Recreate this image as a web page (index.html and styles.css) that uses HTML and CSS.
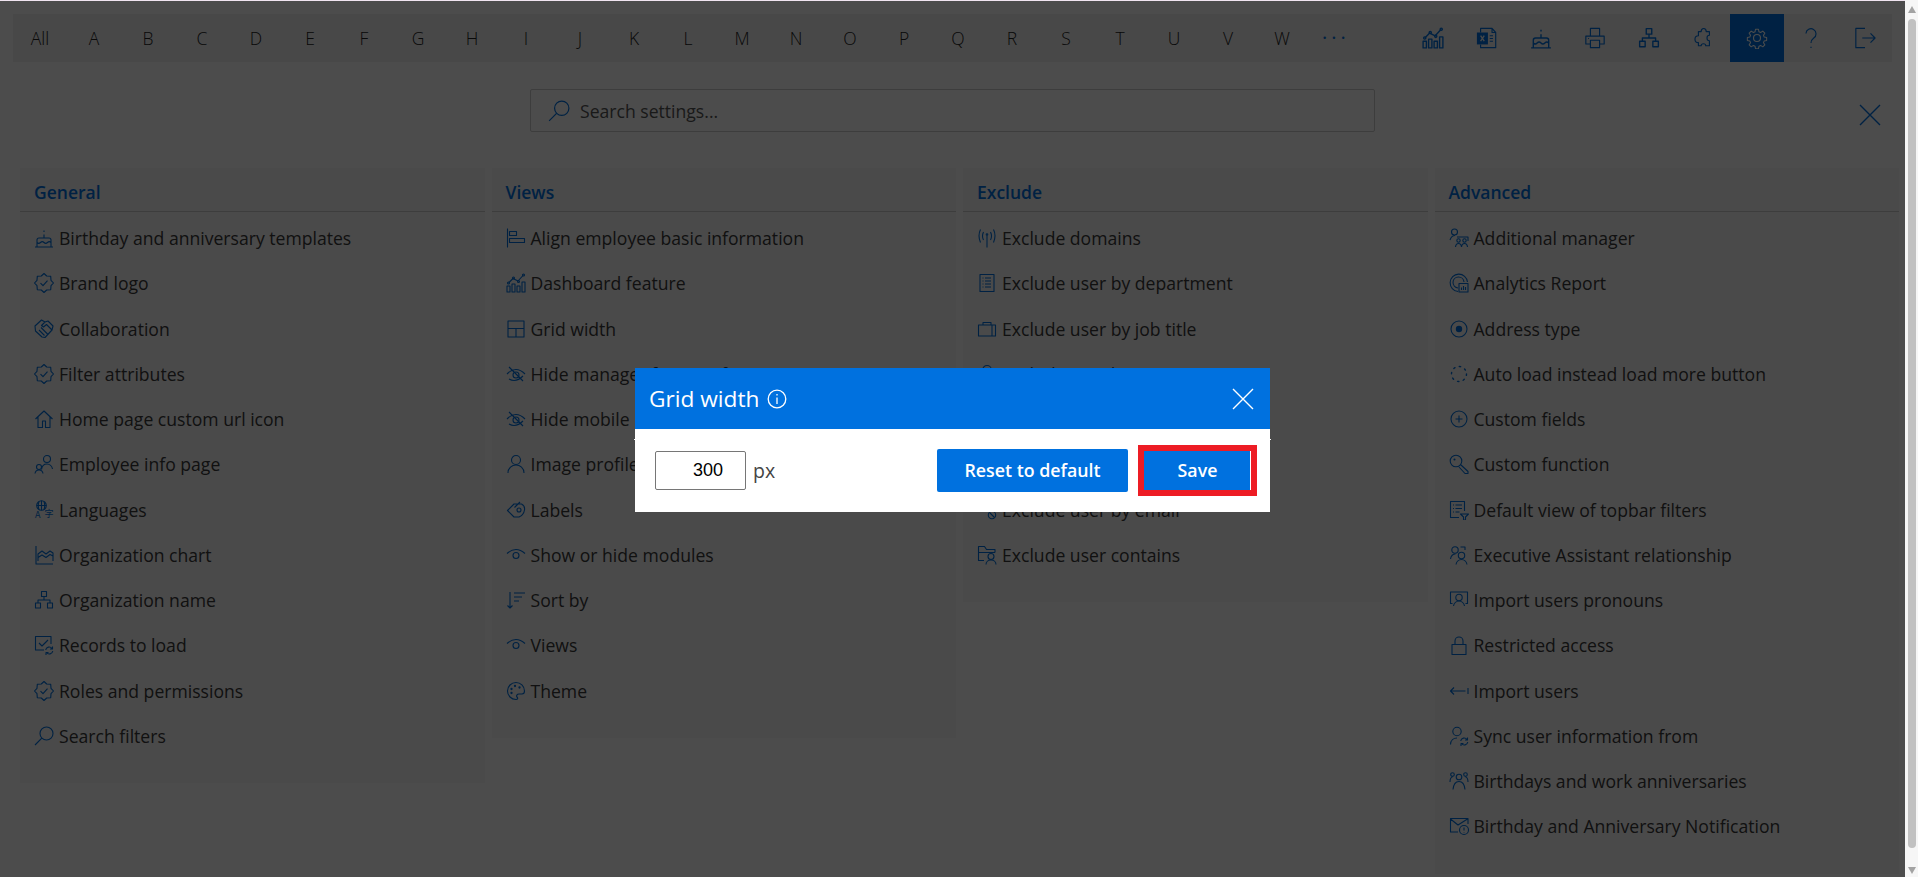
FILE: index.html
```html
<!DOCTYPE html>
<html lang="en">
<head>
<meta charset="utf-8">
<title>Settings</title>
<link rel="stylesheet" href="styles.css">
</head>
<body>
<svg class="defs" aria-hidden="true">
  <symbol id="cake" viewBox="0 0 20 20"><path d="M1 19h18M3 19v-7a2 2 0 0 1 2-2h10a2 2 0 0 1 2 2v7M3 14.500q1.700 1.800 3.500 0t3.500 0 3.500 0 3.500 0M10 10V6.500M10 2.500v1.500"/></symbol>
  <symbol id="badge" viewBox="0 0 20 20"><path d="M10 .5 12.700 3 16.700 3.300 17 7.300 19.500 10 17 12.700 16.700 16.700 12.700 17 10 19.500 7.300 17 3.300 16.700 3 12.700 .5 10 3 7.300 3.300 3.300 7.300 3ZM6.500 10.200 9 12.700 13.500 7.700"/></symbol>
  <symbol id="hands" viewBox="0 0 20 20"><path d="M1 7 7.500 1 11 3 14 2 19 7 18 11 11 18.500 8 18 1.500 12ZM11 3 7.500 6.500 9.500 8 12.500 5.500 18 11M7 8.500 13.500 15M5 11 10.500 16.500"/></symbol>
  <symbol id="home" viewBox="0 0 20 20"><path d="M1.500 10 10 2l8.500 8M4 8v10.500h4.500V12h3v6.500H16V8"/></symbol>
  <symbol id="people" viewBox="0 0 20 20"><circle cx="13" cy="5" r="3.500"/><path d="M7.500 15.500c.5-3.500 3-5.500 5.500-5.500s5 2 5.500 5"/><circle cx="5" cy="13" r="2.500"/><path d="M1 19.500c.3-2 2-3.500 4-3.500s3.700 1.500 4 3.500"/></symbol>
  <symbol id="area" viewBox="0 0 20 20"><path d="M2 1v18h17M4 16V9l4-3 4 3 4-3 3 2v8M4 12.500l4-2.500 4 2.500 4-3 3 1.500"/></symbol>
  <symbol id="org" viewBox="0 0 20 20"><rect x="7.500" y="1.500" width="5" height="5"/><path d="M10 6.500V10M4 13v-3h12v3"/><rect x="1.500" y="13" width="5" height="5"/><rect x="13.500" y="13" width="5" height="5"/></symbol>
  <symbol id="records" viewBox="0 0 20 20"><path d="M17 9V1.500H1.500V15H10M5 8l3 3 6-6M11.700 15a3.500 3.500 0 0 1 6.300-1.500M18.800 16a3.500 3.500 0 0 1-6.300 1.500M18.500 11.500V14H16M12 20v-2.500h2.500"/></symbol>
  <symbol id="search" viewBox="0 0 20 20"><circle cx="12.500" cy="7.500" r="6.500"/><path d="M7.800 12.200 1 19"/></symbol>
  <symbol id="align" viewBox="0 0 20 20"><path d="M1.500 .5v19"/><rect x="3.500" y="3.500" width="7" height="4"/><rect x="3.500" y="10.500" width="15" height="4"/></symbol>
  <symbol id="dash" viewBox="0 0 20 20"><rect x="1" y="13" width="3" height="6"/><rect x="6" y="11" width="3" height="8"/><rect x="11" y="13" width="3" height="6"/><rect x="16" y="9" width="3" height="10"/><path d="M3 9.500 7 5.500 12 8 17 2.500"/><circle cx="2.500" cy="10" r="1"/><circle cx="7.500" cy="5" r="1"/><circle cx="12.500" cy="8.500" r="1"/><circle cx="17.500" cy="2" r="1"/></symbol>
  <symbol id="grid" viewBox="0 0 20 20"><rect x="2" y="2" width="16" height="16"/><path d="M2 9.500h16M10 9.500V18"/></symbol>
  <symbol id="eyeoff" viewBox="0 0 20 20"><path d="M1 10q9-9 18 0M3 15q7 4 14-3M3 3l14 14"/><circle cx="10" cy="11" r="3"/></symbol>
  <symbol id="person" viewBox="0 0 20 20"><circle cx="10" cy="6" r="4.500"/><path d="M2 19c0-5 4-8 8-8s8 3 8 8"/></symbol>
  <symbol id="tag" viewBox="0 0 20 20"><path d="M1.500 10.500 8 4h7.500c2 1 3.500 3 3 6s-3 6-5.500 7H8ZM14 2 8.500 7.500"/><circle cx="13" cy="10" r="2"/></symbol>
  <symbol id="eye" viewBox="0 0 20 20"><path d="M1 8.500Q10 .5 19 8.500"/><circle cx="10" cy="10.500" r="3"/></symbol>
  <symbol id="sort" viewBox="0 0 20 20"><path d="M4 2v16M1.500 15.500 4 18l2.500-2.500M8 3h11M8 7h8M8 11h5"/></symbol>
  <symbol id="palette" viewBox="0 0 20 20"><path d="M10 1.500a8.500 8.500 0 1 0 0 17c2 0 2-1.500 1-2.500s0-3 2-3h3c2 0 2.500-2 2.500-3 0-5-4-8.500-8.500-8.500Z"/><circle cx="5.500" cy="8" r=".6"/><circle cx="9" cy="5" r=".6"/><circle cx="13.500" cy="6.500" r=".6"/><circle cx="5.500" cy="12" r=".6"/></symbol>
  <symbol id="signal" viewBox="0 0 20 20"><path d="M10 7.500v12M6.500 4q-2 4 0 8M3.500 1.500q-3 6 0 13M13.500 4q2 4 0 8M16.500 1.500q3 6 0 13"/><circle cx="10" cy="6.500" r=".8"/></symbol>
  <symbol id="doc" viewBox="0 0 20 20"><rect x="3" y="1.500" width="14" height="17"/><path d="M5.500 5h1M8 5h6M5.500 8h1M8 8h6M5.500 11h1M8 11h6M5.500 14h1M8 14h6"/></symbol>
  <symbol id="case" viewBox="0 0 20 20"><rect x="1.500" y="6" width="17" height="11"/><path d="M6 6V3.500h8V6M15 6v11"/></symbol>
  <symbol id="mailban" viewBox="0 0 20 20"><path d="M1.500 12V2.500h16V9M1.500 3l8 6 8-6"/><circle cx="15" cy="15" r="3.700"/><path d="M12.500 12.500l5 5"/></symbol>
  <symbol id="folderuser" viewBox="0 0 20 20"><path d="M7 15.500H1.500V1.500h6l2 3h8.500v3M1.500 7.500H18"/><circle cx="14" cy="11.500" r="3"/><path d="M9 19.500c0-3 2.500-4.500 5-4.500s5 1.500 5 4.500"/></symbol>
  <symbol id="mgr" viewBox="0 0 20 20"><circle cx="5.500" cy="4" r="3"/><path d="M1 12c1-3 3-4.500 5-4.500M8 9h11v4"/><circle cx="9.500" cy="12.500" r="1.700"/><circle cx="15.500" cy="12.500" r="1.700"/><path d="M6.500 19c.2-2 1.500-3.500 3-3.500s2.800 1.500 3 3.500M12.500 19c.2-2 1.500-3.500 3-3.500s2.800 1.500 3 3.500"/></symbol>
  <symbol id="report" viewBox="0 0 20 20"><path d="M9 18.500A8.700 8.700 0 1 1 18.500 9M9 15a5.500 5.500 0 1 1 6-6"/><rect x="10" y="10.500" width="9" height="8.500"/><path d="M12.500 17v-2.500M14.500 17v-4M16.500 17v-3"/></symbol>
  <symbol id="radio" viewBox="0 0 20 20"><circle cx="10" cy="10" r="8"/><circle class="solid" cx="10" cy="10" r="3.200"/></symbol>
  <symbol id="spin" viewBox="0 0 20 20"><circle class="dots" cx="10" cy="10" r="7.500"/></symbol>
  <symbol id="plus" viewBox="0 0 20 20"><circle cx="10" cy="10" r="8"/><path d="M10 6.500v7M6.500 10h7"/></symbol>
  <symbol id="key" viewBox="0 0 20 20"><circle cx="7" cy="7" r="5.800"/><circle cx="5.500" cy="5.500" r=".5"/><path d="M11.500 10.500 19 17.500V19.500h-3l-6-6.500"/></symbol>
  <symbol id="listfilter" viewBox="0 0 20 20"><path d="M15.500 11V1.500H1.500V17.500H10M4 5h1M6.500 5h6.500M4 8.500h1M6.500 8.500h6.500M4 12h1M6.500 12h4"/><path d="M11.500 14h8l-3 3v3h-2v-3Z"/></symbol>
  <symbol id="exec" viewBox="0 0 20 20"><circle cx="6" cy="5" r="3.200"/><path d="M1.500 14c.5-3 2.500-5 5-5M11.500 2H16v3"/><circle cx="12.500" cy="10.500" r="3.200"/><path d="M7 19.500c.5-3 3-5 5.500-5s5 2 5.500 5"/></symbol>
  <symbol id="frameuser" viewBox="0 0 20 20"><path d="M3.500 13.500h-2V2h17v11.500h-2"/><circle cx="10" cy="7.500" r="3.200"/><path d="M4.500 16c.5-3 3-5 5.500-5s5 2 5.500 5"/></symbol>
  <symbol id="lock" viewBox="0 0 20 20"><rect x="3" y="9.500" width="14" height="10"/><path d="M6 9.500V6a4 4 0 0 1 8 0v3.500"/></symbol>
  <symbol id="importl" viewBox="0 0 20 20"><path d="M1.500 10h15M5 6.500 1.500 10 5 13.500M19 7v6"/></symbol>
  <symbol id="syncuser" viewBox="0 0 20 20"><circle cx="8" cy="5.500" r="4.200"/><path d="M1.500 18.500c.2-4 3-6.500 6.500-6.500M11.700 15a3.500 3.500 0 0 1 6.300-1.500M18.800 16a3.500 3.500 0 0 1-6.300 1.500M18.500 11.500V14H16M12 20v-2.500h2.500"/></symbol>
  <symbol id="trio" viewBox="0 0 20 20"><circle cx="10" cy="6" r="2.800"/><circle cx="3.500" cy="3.500" r="1.800"/><circle cx="16.500" cy="3.500" r="1.800"/><path d="M4 18.500c.5-5 3-8 6-8s5.500 3 6 8M1 11c0-3 1-5 3-5.500M19 11c0-3-1-5-3-5.500"/></symbol>
  <symbol id="mailclock" viewBox="0 0 20 20"><path d="M9 16H1.500V2.500H19V8M1.500 3l7.500 6 9.500-6"/><circle cx="15" cy="14" r="4.500"/><path d="M15 11.500v3M15 16v.6"/></symbol>
  <symbol id="excel" viewBox="0 0 24 24"><path d="M5 6V1.500h12.500l4 4.500v16.500H5V19M17.500 1.500V6h4M15 9.500h3.500M15 12.500h3.500M15 15.500h3.500"/><rect class="solid" x="1" y="6" width="12" height="13"/><path class="cut" d="M5 9.500l4 6M9 9.500l-4 6"/></symbol>
  <symbol id="printer" viewBox="0 0 24 24"><path d="M7 10V1.500h10V10M7 18.500H2V10h20v8.500h-5"/><rect x="7" y="14.500" width="10" height="8"/><path d="M4.500 12.500h1"/></symbol>
  <symbol id="puzzle" viewBox="0 0 24 24"><path d="M7 5h3c0-4.500 5.500-4.500 5.500 0H19v4c-3.500 0-3.500 6 0 6v5.500h-4c0-3-5-3-5 0H7V17c-5 0-5-7.500 0-7.500Z"/></symbol>
  <symbol id="gear" viewBox="0 0 24 24"><circle cx="12" cy="12" r="3.800"/><path d="M10.200 1.500h3.600l.6 3 2 .9 2.600-1.700 2.500 2.500-1.700 2.600.9 2 3 .6v3.600l-3 .6-.9 2 1.700 2.600-2.500 2.500-2.600-1.700-2 .9-.6 3h-3.600l-.6-3-2-.9-2.600 1.700-2.500-2.500 1.700-2.600-.9-2-3-.6v-3.600l3-.6.900-2-1.700-2.600 2.500-2.500 2.600 1.700 2-.9Z" transform="translate(1.200 1.200) scale(.9)"/></symbol>
  <symbol id="help" viewBox="0 0 24 24"><path d="M6.500 7a5.500 5.500 0 1 1 8.500 5c-2 1.500-3 2.500-3 5.500M12 21.500v1.500"/></symbol>
  <symbol id="logout" viewBox="0 0 24 24"><path d="M12 1.500H2v21h10M9 12h14M18 7l5 5-5 5"/></symbol>
  <symbol id="cross" viewBox="0 0 22 22"><path d="M1 1l20 20M21 1 1 21"/></symbol>
  <symbol id="info" viewBox="0 0 20 20"><circle cx="10" cy="10" r="8.800"/><path d="M10 8.500V15M10 5v1.500"/></symbol>
</svg>

<div class="app">
  <main class="page">
    <nav class="bar">
      <div class="letters">
        <span class="cell">All</span><span class="cell">A</span><span class="cell">B</span><span class="cell">C</span><span class="cell">D</span><span class="cell">E</span><span class="cell">F</span><span class="cell">G</span><span class="cell">H</span><span class="cell">I</span><span class="cell">J</span><span class="cell">K</span><span class="cell">L</span><span class="cell">M</span><span class="cell">N</span><span class="cell">O</span><span class="cell">P</span><span class="cell">Q</span><span class="cell">R</span><span class="cell">S</span><span class="cell">T</span><span class="cell">U</span><span class="cell">V</span><span class="cell">W</span><span class="cell more">···</span>
      </div>
      <div class="tools">
        <span class="cell"><svg class="tool"><use href="#dash"/></svg></span>
        <span class="cell"><svg class="tool"><use href="#excel"/></svg></span>
        <span class="cell"><svg class="tool"><use href="#cake"/></svg></span>
        <span class="cell"><svg class="tool"><use href="#printer"/></svg></span>
        <span class="cell"><svg class="tool"><use href="#org"/></svg></span>
        <span class="cell"><svg class="tool"><use href="#puzzle"/></svg></span>
        <span class="cell active"><svg class="tool"><use href="#gear"/></svg></span>
        <span class="cell"><svg class="tool"><use href="#help"/></svg></span>
        <span class="cell"><svg class="tool"><use href="#logout"/></svg></span>
      </div>
    </nav>

    <div class="search-row">
      <label class="search"><svg class="search-ic"><use href="#search"/></svg><span>Search settings...</span></label>
      <svg class="panel-close"><use href="#cross"/></svg>
    </div>

    <div class="columns">
      <section class="card">
        <h2>General</h2>
        <ul>
          <li><svg class="ic"><use href="#cake"/></svg>Birthday and anniversary templates</li>
          <li><svg class="ic"><use href="#badge"/></svg>Brand logo</li>
          <li><svg class="ic"><use href="#hands"/></svg>Collaboration</li>
          <li><svg class="ic"><use href="#badge"/></svg>Filter attributes</li>
          <li><svg class="ic"><use href="#home"/></svg>Home page custom url icon</li>
          <li><svg class="ic"><use href="#people"/></svg>Employee info page</li>
          <li><svg class="ic lang" viewBox="0 0 20 20"><circle cx="7.500" cy="5.500" r="4.800"/><path d="M2.700 5.500h9.600M7.500 .7v9.600M5 1.500q-1.500 4 0 8M10 1.500q1.500 4 0 8"/><text class="glyph" x="1" y="18">A</text><text class="glyph" x="10.500" y="16.500">字</text></svg>Languages</li>
          <li><svg class="ic"><use href="#area"/></svg>Organization chart</li>
          <li><svg class="ic"><use href="#org"/></svg>Organization name</li>
          <li><svg class="ic"><use href="#records"/></svg>Records to load</li>
          <li><svg class="ic"><use href="#badge"/></svg>Roles and permissions</li>
          <li><svg class="ic"><use href="#search"/></svg>Search filters</li>
        </ul>
      </section>
      <section class="card">
        <h2>Views</h2>
        <ul>
          <li><svg class="ic"><use href="#align"/></svg>Align employee basic information</li>
          <li><svg class="ic"><use href="#dash"/></svg>Dashboard feature</li>
          <li><svg class="ic"><use href="#grid"/></svg>Grid width</li>
          <li><svg class="ic"><use href="#eyeoff"/></svg>Hide manager for specific</li>
          <li><svg class="ic"><use href="#eyeoff"/></svg>Hide mobile</li>
          <li><svg class="ic"><use href="#person"/></svg>Image profile</li>
          <li><svg class="ic"><use href="#tag"/></svg>Labels</li>
          <li><svg class="ic"><use href="#eye"/></svg>Show or hide modules</li>
          <li><svg class="ic"><use href="#sort"/></svg>Sort by</li>
          <li><svg class="ic"><use href="#eye"/></svg>Views</li>
          <li><svg class="ic"><use href="#palette"/></svg>Theme</li>
        </ul>
      </section>
      <section class="card">
        <h2>Exclude</h2>
        <ul>
          <li><svg class="ic"><use href="#signal"/></svg>Exclude domains</li>
          <li><svg class="ic"><use href="#doc"/></svg>Exclude user by department</li>
          <li><svg class="ic"><use href="#case"/></svg>Exclude user by job title</li>
          <li><svg class="ic"><use href="#person"/></svg>Exclude user by name</li>
          <li></li>
          <li></li>
          <li><svg class="ic"><use href="#mailban"/></svg>Exclude user by email</li>
          <li><svg class="ic"><use href="#folderuser"/></svg>Exclude user contains</li>
        </ul>
      </section>
      <section class="card">
        <h2>Advanced</h2>
        <ul>
          <li><svg class="ic"><use href="#mgr"/></svg>Additional manager</li>
          <li><svg class="ic"><use href="#report"/></svg>Analytics Report</li>
          <li><svg class="ic"><use href="#radio"/></svg>Address type</li>
          <li><svg class="ic"><use href="#spin"/></svg>Auto load instead load more button</li>
          <li><svg class="ic"><use href="#plus"/></svg>Custom fields</li>
          <li><svg class="ic"><use href="#key"/></svg>Custom function</li>
          <li><svg class="ic"><use href="#listfilter"/></svg>Default view of topbar filters</li>
          <li><svg class="ic"><use href="#exec"/></svg>Executive Assistant relationship</li>
          <li><svg class="ic"><use href="#frameuser"/></svg>Import users pronouns</li>
          <li><svg class="ic"><use href="#lock"/></svg>Restricted access</li>
          <li><svg class="ic"><use href="#importl"/></svg>Import users</li>
          <li><svg class="ic"><use href="#syncuser"/></svg>Sync user information from</li>
          <li><svg class="ic"><use href="#trio"/></svg>Birthdays and work anniversaries</li>
          <li><svg class="ic"><use href="#mailclock"/></svg>Birthday and Anniversary Notification</li>
        </ul>
      </section>
    </div>

    <div class="overlay">
      <div class="modal">
        <header class="modal-head">
          <span class="modal-title">Grid width</span>
          <svg class="info"><use href="#info"/></svg>
          <svg class="modal-close"><use href="#cross"/></svg>
        </header>
        <div class="modal-body">
          <input class="num" type="text" value="300" aria-label="Grid width in pixels">
          <span class="unit">px</span>
          <button class="btn reset" type="button">Reset to default</button>
          <button class="btn save" type="button">Save</button>
        </div>
      </div>
    </div>
  </main>

  <div class="scrollbar">
    <span class="arrow up"></span>
    <span class="thumb"></span>
    <span class="arrow down"></span>
  </div>
</div>
</body>
</html>
```

FILE: styles.css
```css
* { box-sizing: border-box; }

html, body {
  margin: 0;
  height: 100%;
  overflow: hidden;
  background: #fff;
}

body {
  font-family: "Open Sans", "Noto Sans", sans-serif;
  color: #3a3a3a;
}

.defs { display: none; }

svg {
  fill: none;
  stroke: currentColor;
  stroke-width: 1.100;
  stroke-linejoin: round;
}

.solid { fill: currentColor; stroke: none; }
.cut { stroke: #f0f0f0; stroke-width: 1.500; }
.dots { stroke-dasharray: 1.400 4.500; stroke-width: 1.400; stroke-linecap: round; }
.glyph {
  fill: currentColor;
  stroke: none;
  font-size: 9px;
  font-family: "Noto Sans CJK SC", "Noto Sans", sans-serif;
}

.app {
  display: flex;
  height: 100vh;
}

.page {
  position: relative;
  width: 1905px;
  height: 100%;
  overflow: hidden;
  border-top: 1px solid #f0e4f0;
  background: #fff;
}

/* top bar */
.bar {
  display: flex;
  justify-content: space-between;
  height: 48px;
  margin: 13px 13px 0;
  background: #f0f0f0;
}

.letters, .tools { display: flex; }

.cell {
  display: flex;
  align-items: center;
  justify-content: center;
  width: 54px;
  color: #222;
  font-size: 17.500px;
  font-weight: 300;
}

.more {
  padding-bottom: 2px;
  color: #0071df;
  font-size: 20px;
  font-weight: 400;
  letter-spacing: 4px;
}

.tools .cell { color: #0071df; }
.tools .active { background: #0071df; color: #fff; }

.tool {
  width: 22px;
  height: 22px;
  stroke-width: 1.250;
}

/* search row */
.search-row {
  position: relative;
  height: 43px;
  margin: 27px 0 36px 530px;
}

.search {
  display: flex;
  align-items: center;
  width: 845px;
  height: 43px;
  padding-left: 17px;
  border: 1px solid #ccc;
  border-radius: 2px;
  color: #555;
  font-size: 17.600px;
}

.search-ic {
  width: 22px;
  height: 22px;
  margin-right: 10px;
  color: #0071df;
}

.panel-close {
  position: absolute;
  top: 15px;
  left: 1329px;
  width: 22px;
  height: 22px;
  color: #0071df;
  stroke-width: 1.400;
}

/* setting columns */
.columns {
  display: grid;
  grid-template-columns: repeat(4, 464.500px);
  gap: 7px;
  align-items: start;
  padding-left: 20px;
}

.card {
  padding-bottom: 24px;
  background: #f7f7f7;
}

.card h2 {
  height: 44px;
  margin: 0;
  padding: 12px 0 0 14px;
  border-bottom: 1px solid #ccc;
  color: #0071df;
  font-size: 17.500px;
  font-weight: 600;
  line-height: 24px;
}

.card ul {
  margin: 0;
  padding: 4px 0 0 14px;
  list-style: none;
}

.card li {
  display: flex;
  align-items: center;
  height: 45.250px;
  padding-bottom: 1px;
  font-size: 17.600px;
  white-space: nowrap;
}

.ic {
  flex: none;
  width: 20px;
  height: 20px;
  margin-right: 5px;
  color: #0071df;
}

.lang { overflow: visible; }

/* dim layer and dialog */
.overlay {
  position: absolute;
  inset: 0;
  display: flex;
  align-items: center;
  justify-content: center;
  padding-top: 2px;
  background: rgba(0, 0, 0, .7);
}

.modal {
  position: relative;
  width: 635px;
  background: #fff;
}

/* hairline that pokes out either side of the dialog */
.modal::before {
  content: "";
  position: absolute;
  top: 71px;
  left: -1px;
  right: -1px;
  height: 1px;
  background: #fff;
}

.modal-head {
  display: flex;
  align-items: center;
  height: 61px;
  padding: 0 16px 0 14px;
  background: #0071df;
  color: #fff;
}

.modal-title { font-size: 22.700px; }

.info {
  width: 20px;
  height: 20px;
  margin-left: 8px;
  stroke-width: 1.300;
}

.modal-close {
  width: 22px;
  height: 22px;
  margin-left: auto;
  stroke-width: 1.400;
}

.modal-body {
  display: flex;
  align-items: center;
  height: 83px;
  padding: 0 13px 0 20px;
}

.num {
  width: 91px;
  height: 39px;
  padding: 0 22px 0 0;
  border: 1px solid #767676;
  border-radius: 2px;
  color: #000;
  font: 18px "Liberation Sans", Arial, sans-serif;
  text-align: right;
}

.unit {
  margin-left: 7px;
  color: #444;
  font-size: 19.500px;
}

.btn {
  height: 43px;
  padding: 0 0 1px;
  border: 0;
  border-radius: 2px;
  background: #0071df;
  color: #fff;
  font: 600 17.800px "Open Sans", "Noto Sans", sans-serif;
}

.reset {
  width: 191px;
  margin-left: auto;
}

.save {
  width: 119px;
  height: 51px;
  margin-left: 10px;
  padding-bottom: 1px;
  border: 6px solid #ed1c24;
  border-radius: 0;
  box-shadow: inset -1px 0 0 #fff;
}

/* drawn page scrollbar */
.scrollbar {
  display: flex;
  flex: 1;
  flex-direction: column;
  align-items: center;
  padding: 6px 2px 3px 3px;
  background: #f6f6f6;
}

.arrow {
  width: 0;
  height: 0;
  border-left: 4.500px solid transparent;
  border-right: 4.500px solid transparent;
}

.up { border-bottom: 7px solid #a3a3a3; }
.down { border-top: 7px solid #a3a3a3; margin-top: 19px; }

.thumb {
  width: 8px;
  height: 830px;
  margin-top: 6px;
  border-radius: 4px;
  background: #c1c1c1;
}
```
